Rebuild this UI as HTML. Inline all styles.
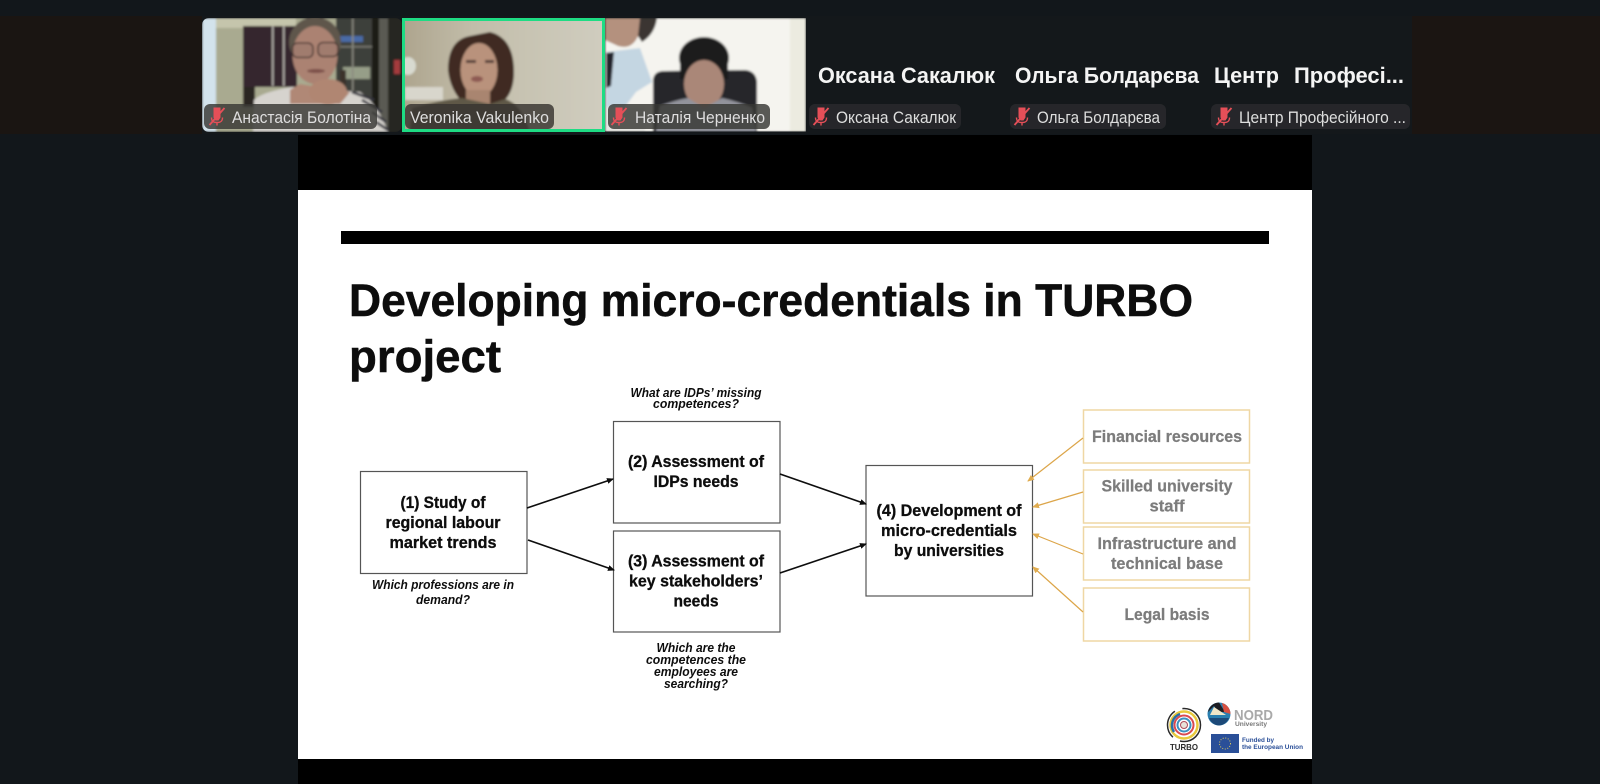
<!DOCTYPE html>
<html><head><meta charset="utf-8"><title>Zoom meeting</title>
<style>
html,body{margin:0;padding:0;background:#12171b;width:1600px;height:784px;overflow:hidden}
svg{display:block}
text{font-family:"Liberation Sans","DejaVu Sans",sans-serif}
.b{font-weight:700;fill:#0a0a0a;stroke:#0a0a0a;stroke-width:.3px;font-size:16.5px;text-anchor:middle}
.q{font-weight:700;font-style:italic;fill:#111;font-size:12.5px;text-anchor:middle}
.g{font-weight:700;fill:#7c7c7c;stroke:#7c7c7c;stroke-width:.25px;font-size:16.5px;text-anchor:middle}
.l{fill:#dedede;font-size:17px}
.n{fill:#f4f4f4;font-size:22px;font-weight:700}
</style></head>
<body>
<svg width="1600" height="784" viewBox="0 0 1600 784" xmlns="http://www.w3.org/2000/svg">
<defs>
<filter id="s" x="-5%" y="-5%" width="110%" height="110%"><feGaussianBlur stdDeviation="0.35"/></filter>
<filter id="v" x="-5%" y="-5%" width="110%" height="110%"><feGaussianBlur stdDeviation="1"/></filter>
<clipPath id="c1"><rect x="202" y="18" width="200" height="114" rx="7"/></clipPath>
<clipPath id="c2"><rect x="402" y="18" width="203" height="114"/></clipPath>
<clipPath id="c3"><rect x="605" y="18" width="201" height="113.500"/></clipPath>
<linearGradient id="wl2" x1="0" x2="1" y1="0" y2="0"><stop offset="0" stop-color="#ada48d"/><stop offset=".35" stop-color="#c2bdaa"/><stop offset="1" stop-color="#d0cdbf"/></linearGradient>
<marker id="ab" markerWidth="7" markerHeight="7" refX="6" refY="3" orient="auto" markerUnits="userSpaceOnUse"><path d="M0 0L7 3L0 6z" fill="#111"/></marker>
<marker id="ao" markerWidth="7" markerHeight="7" refX="6" refY="3" orient="auto" markerUnits="userSpaceOnUse"><path d="M0 0L7 3L0 6z" fill="#e0ac50"/></marker>
<g id="mic"><path d="M-3.500 -9h7v10l-2 3h-3l-2-3z" fill="#e64f59"/><path d="M-5.500 1c0 4 2 5 5.500 5s5.500-1 5.500-5M0 6v3" fill="none" stroke="#e64f59" stroke-width="1.400"/><path d="M-7.500 8.500L7.500 -8.500" stroke="#e64f59" stroke-width="1.800"/></g>
</defs>

<rect width="1600" height="784" fill="#12171b"/>
<rect x="0" y="16" width="202" height="118" fill="#1a1512"/>
<rect x="1412" y="16" width="188" height="118" fill="#1b1512"/>
<rect x="202" y="16" width="1210" height="118" fill="#14181b"/>

<!-- Tile 1 -->
<g clip-path="url(#c1)"><g filter="url(#v)">
<rect x="202" y="18" width="200" height="114" fill="#a9aa90"/>
<rect x="216" y="18" width="80" height="10" fill="#c5c5ac"/>
<rect x="202" y="18" width="14" height="114" fill="#d3e3ec"/>
<rect x="243" y="26" width="54" height="61" fill="#35282f"/>
<rect x="243" y="87" width="12" height="20" fill="#2a2624"/>
<rect x="272" y="26" width="1.500" height="60" fill="#b8b4ae"/>
<rect x="283" y="26" width="1.500" height="60" fill="#b8b4ae"/>
<rect x="336" y="18" width="46" height="112" fill="#3e3f3b"/>
<rect x="340" y="36" width="23" height="6" fill="#4a6aa6"/>
<rect x="343" y="67" width="27" height="12" fill="#969e88"/>
<rect x="340" y="46" width="34" height="1.500" fill="#7a7a72"/>
<rect x="352" y="18" width="1.500" height="112" fill="#8a8a80"/>
<rect x="372" y="18" width="7" height="114" fill="#1c1a18"/>
<rect x="379" y="18" width="9" height="114" fill="#5a5a52"/>
<rect x="388" y="18" width="14" height="114" fill="#252524"/>
<rect x="394" y="60" width="6" height="14" fill="#a53b3e"/>
<ellipse cx="315" cy="42" rx="26" ry="25" fill="#5f564c"/>
<rect x="340" y="70" width="6" height="16" fill="#3a322a"/>
<ellipse cx="315" cy="55" rx="22.500" ry="29" fill="#ab8272"/>
<rect x="292.500" y="43" width="20.500" height="14.500" rx="5" fill="#a07c6e" stroke="#3e2e2a" stroke-width="1.300"/>
<rect x="318" y="42.500" width="20" height="14" rx="5" fill="#a07c6e" stroke="#3e2e2a" stroke-width="1.300"/>
<ellipse cx="316" cy="71" rx="9" ry="2" fill="#7c5048"/>
<path d="M253 132L254 100Q262 92 292 87L360 92Q378 104 388 132z" fill="#d6d3ce"/>
<path d="M352 92L374 100M362 100L382 112M372 112L386 122M376 122L388 130" stroke="#34343e" stroke-width="2.600"/>
<path d="M290 90L300 84L350 92L340 104H290z" fill="#b08876"/>
<ellipse cx="328" cy="92" rx="19" ry="13" fill="#b08672"/>
</g></g>
<!-- Tile 2 -->
<g clip-path="url(#c2)"><g filter="url(#v)">
<rect x="402" y="18" width="203" height="114" fill="url(#wl2)"/>
<rect x="405" y="87" width="38" height="13" fill="#d8d6cc"/>
<ellipse cx="408" cy="66" rx="8" ry="9" fill="#d8dad0"/>
<path d="M470 36Q448 40 448 70Q450 90 464 104H500Q514 95 514 72Q514 38 490 32z" fill="#3f2b20"/>
<ellipse cx="479" cy="70" rx="18.500" ry="27" fill="#b9927c"/>
<rect x="466" y="90" width="24" height="14" fill="#a98570"/>
<path d="M410 132L412 108Q440 100 462 98L490 104L505 99Q522 104 530 132z" fill="#5f5846"/>
<rect x="466" y="60" width="10" height="3" fill="#57403a"/>
<rect x="485" y="60" width="9" height="3" fill="#57403a"/>
<ellipse cx="477" cy="79" rx="6" ry="3" fill="#8e5a52"/>
</g><rect x="403.500" y="19.500" width="200" height="111" fill="none" stroke="#1edc84" stroke-width="3"/></g>
<!-- Tile 3 -->
<g clip-path="url(#c3)"><g filter="url(#v)">
<rect x="605" y="18" width="201" height="114" fill="#f5f4ef"/>
<rect x="790" y="18" width="16" height="114" fill="#ecebe0"/>
<path d="M630 18H657Q655 34 642 42L634 30z" fill="#3a3432"/>
<path d="M605 18H640L638 36Q632 50 618 46L605 40z" fill="#b4917e"/>
<path d="M606 52L640 48L652 82L636 92L624 108H606z" fill="#c4d6e2"/>
<path d="M606 53L614 52L611 86L606 88z" fill="#23242a"/>
<path d="M653 132V80Q654 71 664 71L745 70Q756 71 757 82V132z" fill="#25282c"/>
<ellipse cx="704" cy="58" rx="25" ry="21" fill="#1c1a1d"/>
<rect x="680" y="55" width="10" height="24" fill="#1c1a1d"/>
<rect x="718" y="55" width="10" height="24" fill="#1c1a1d"/>
<ellipse cx="704" cy="84" rx="20" ry="24" fill="#aa8778"/>
<path d="M656 132L660 106Q676 100 688 98L704 108L722 98Q740 102 752 108L756 132z" fill="#92939b"/>
<rect x="605" y="107" width="40" height="25" fill="#e8e8e4"/>
</g></g>

<!-- Name bars -->
<g filter="url(#s)">
<rect x="204" y="104" width="173" height="25" rx="6" fill="#383633" fill-opacity=".82"/>
<rect x="405" y="104" width="149" height="25" rx="6" fill="#383530" fill-opacity=".82"/>
<rect x="608" y="104" width="162" height="25" rx="6" fill="#383633" fill-opacity=".82"/>
<rect x="809" y="104" width="152" height="25" rx="6" fill="#26282a"/>
<rect x="1010" y="104" width="156" height="25" rx="6" fill="#26282a"/>
<rect x="1211" y="104" width="199" height="25" rx="6" fill="#26282a"/>
<use href="#mic" x="217" y="116.500"/><use href="#mic" x="619" y="116.500"/><use href="#mic" x="821" y="116.500"/><use href="#mic" x="1022" y="116.500"/><use href="#mic" x="1224" y="116.500"/>
<text class="l" x="232" y="123" textLength="139" lengthAdjust="spacingAndGlyphs">Анастасія Болотіна</text>
<text class="l" x="410" y="123" textLength="139" lengthAdjust="spacingAndGlyphs">Veronika Vakulenko</text>
<text class="l" x="635" y="123" textLength="130" lengthAdjust="spacingAndGlyphs">Наталія Черненко</text>
<text class="l" x="836" y="123" textLength="120" lengthAdjust="spacingAndGlyphs">Оксана Сакалюк</text>
<text class="l" x="1037" y="123" textLength="123" lengthAdjust="spacingAndGlyphs">Ольга Болдарєва</text>
<text class="l" x="1239" y="123" textLength="167" lengthAdjust="spacingAndGlyphs">Центр Професійного ...</text>
<text class="n" x="818" y="83" textLength="177" lengthAdjust="spacingAndGlyphs">Оксана Сакалюк</text>
<text class="n" x="1015" y="83" textLength="184" lengthAdjust="spacingAndGlyphs">Ольга Болдарєва</text>
<text class="n" x="1214" y="83" textLength="65" lengthAdjust="spacingAndGlyphs">Центр</text>
<text class="n" x="1294" y="83" textLength="110" lengthAdjust="spacingAndGlyphs">Професі...</text>
</g>

<!-- Slide -->
<rect x="298" y="135" width="1014" height="649" fill="#000"/>
<rect x="298" y="190" width="1014" height="569" fill="#fff"/>
<rect x="341" y="231" width="928" height="13" fill="#000"/>

<g filter="url(#s)">
<text x="349" y="316" font-size="45" font-weight="700" fill="#0a0a0a" stroke="#0a0a0a" stroke-width=".5" textLength="844" lengthAdjust="spacingAndGlyphs">Developing micro-credentials in TURBO</text>
<text x="349" y="372" font-size="45" font-weight="700" fill="#0a0a0a" stroke="#0a0a0a" stroke-width=".5" textLength="152" lengthAdjust="spacingAndGlyphs">project</text>

<g fill="#fff" stroke="#555" stroke-width="1.200">
<rect x="360.500" y="471.500" width="166.500" height="102"/>
<rect x="613.500" y="421.500" width="166.500" height="101.500"/>
<rect x="613.500" y="531" width="166.500" height="101"/>
<rect x="866" y="465.500" width="166.500" height="130.500"/>
</g>
<g fill="#fff" stroke="#efd7a4" stroke-width="1.500">
<rect x="1083.500" y="410" width="166" height="53"/>
<rect x="1083.500" y="470" width="166" height="53"/>
<rect x="1083.500" y="527" width="166" height="53"/>
<rect x="1083.500" y="588" width="166" height="53"/>
</g>
<g stroke="#0a0a0a" stroke-width="1.700" fill="none">
<path d="M527 508L613 479" marker-end="url(#ab)"/>
<path d="M528 540L614 570" marker-end="url(#ab)"/>
<path d="M780 474L866 504" marker-end="url(#ab)"/>
<path d="M780 573L866 544" marker-end="url(#ab)"/>
</g>
<g stroke="#dca548" stroke-width="1.200" fill="none">
<path d="M1083 438L1028 481" marker-end="url(#ao)"/>
<path d="M1083 492L1033 507" marker-end="url(#ao)"/>
<path d="M1083 554L1033 534" marker-end="url(#ao)"/>
<path d="M1083 612L1033 567" marker-end="url(#ao)"/>
</g>

<text class="b" x="443" y="508" textLength="85" lengthAdjust="spacingAndGlyphs">(1) Study of</text>
<text class="b" x="443" y="528" textLength="115" lengthAdjust="spacingAndGlyphs">regional labour</text>
<text class="b" x="443" y="548" textLength="107" lengthAdjust="spacingAndGlyphs">market trends</text>
<text class="b" x="696" y="467" textLength="136" lengthAdjust="spacingAndGlyphs">(2) Assessment of</text>
<text class="b" x="696" y="487" textLength="85" lengthAdjust="spacingAndGlyphs">IDPs needs</text>
<text class="b" x="696" y="566.500" textLength="136" lengthAdjust="spacingAndGlyphs">(3) Assessment of</text>
<text class="b" x="696" y="586.500" textLength="134" lengthAdjust="spacingAndGlyphs">key stakeholders’</text>
<text class="b" x="696" y="606.500" textLength="45" lengthAdjust="spacingAndGlyphs">needs</text>
<text class="b" x="949" y="516" textLength="145" lengthAdjust="spacingAndGlyphs">(4) Development of</text>
<text class="b" x="949" y="536" textLength="136" lengthAdjust="spacingAndGlyphs">micro-credentials</text>
<text class="b" x="949" y="556" textLength="110" lengthAdjust="spacingAndGlyphs">by universities</text>

<text class="g" x="1167" y="442" textLength="150" lengthAdjust="spacingAndGlyphs">Financial resources</text>
<text class="g" x="1167" y="491.500" textLength="131" lengthAdjust="spacingAndGlyphs">Skilled university</text>
<text class="g" x="1167" y="511.500" textLength="35" lengthAdjust="spacingAndGlyphs">staff</text>
<text class="g" x="1167" y="549" textLength="139" lengthAdjust="spacingAndGlyphs">Infrastructure and</text>
<text class="g" x="1167" y="569" textLength="112" lengthAdjust="spacingAndGlyphs">technical base</text>
<text class="g" x="1167" y="620" textLength="85" lengthAdjust="spacingAndGlyphs">Legal basis</text>

<text class="q" x="696" y="397" textLength="131" lengthAdjust="spacingAndGlyphs">What are IDPs’ missing</text>
<text class="q" x="696" y="408" textLength="86" lengthAdjust="spacingAndGlyphs">competences?</text>
<text class="q" x="443" y="589" textLength="142" lengthAdjust="spacingAndGlyphs">Which professions are in</text>
<text class="q" x="443" y="604" textLength="54" lengthAdjust="spacingAndGlyphs">demand?</text>
<text class="q" x="696" y="652" textLength="79" lengthAdjust="spacingAndGlyphs">Which are the</text>
<text class="q" x="696" y="664" textLength="100" lengthAdjust="spacingAndGlyphs">competences the</text>
<text class="q" x="696" y="676" textLength="84" lengthAdjust="spacingAndGlyphs">employees are</text>
<text class="q" x="696" y="688" textLength="64" lengthAdjust="spacingAndGlyphs">searching?</text>

<!-- Logos -->
<circle cx="1184" cy="725" r="16.500" fill="none" stroke="#2a2a2a" stroke-width="1.500" stroke-dasharray="30 8"/>
<circle cx="1184" cy="725" r="13.500" fill="none" stroke="#e8c93c" stroke-width="2.500"/>
<path d="M1174 732A12 12 0 0 1 1180 714" fill="none" stroke="#2a6fa8" stroke-width="2.500"/>
<circle cx="1184" cy="725" r="9.500" fill="none" stroke="#d9484f" stroke-width="2"/>
<circle cx="1184" cy="725" r="6.500" fill="none" stroke="#3a8fc0" stroke-width="2"/>
<circle cx="1184" cy="725" r="3.500" fill="#e8e2da" stroke="#b04a5a"/>
<text x="1170" y="750" font-size="8.500" font-weight="700" fill="#2b2b2b" textLength="28" lengthAdjust="spacingAndGlyphs">TURBO</text>
<circle cx="1219" cy="714" r="11.500" fill="#2c7fb0"/>
<path d="M1208 712A11.500 11.500 0 0 1 1219 702.500L1225 712L1218 712L1214 706z" fill="#1d1d20"/>
<path d="M1222 703A11.500 11.500 0 0 1 1230.500 714L1224 712z" fill="#d8503f"/>
<path d="M1209 718L1229 718A11.500 11.500 0 0 1 1219 725.500A11.500 11.500 0 0 1 1209 718z" fill="#1d4a78"/>
<path d="M1214 707L1226 715H1210z" fill="#f0e6c8"/>
<text x="1234" y="720" font-size="15" font-weight="700" fill="#a9a9a9" textLength="39" lengthAdjust="spacingAndGlyphs">NORD</text>
<text x="1235" y="726" font-size="6.500" font-weight="700" fill="#777" textLength="32" lengthAdjust="spacingAndGlyphs">University</text>
<rect x="1211" y="734" width="28" height="19" fill="#2a4f98"/>
<circle cx="1225" cy="743.500" r="5.500" fill="none" stroke="#d8c860" stroke-width="1" stroke-dasharray="1 1.600"/>
<text x="1242" y="742" font-size="6.500" font-weight="700" fill="#2a4f98" textLength="32" lengthAdjust="spacingAndGlyphs">Funded by</text>
<text x="1242" y="749" font-size="6.500" font-weight="700" fill="#2a4f98" textLength="61" lengthAdjust="spacingAndGlyphs">the European Union</text>
</g>
</svg>
</body></html>
